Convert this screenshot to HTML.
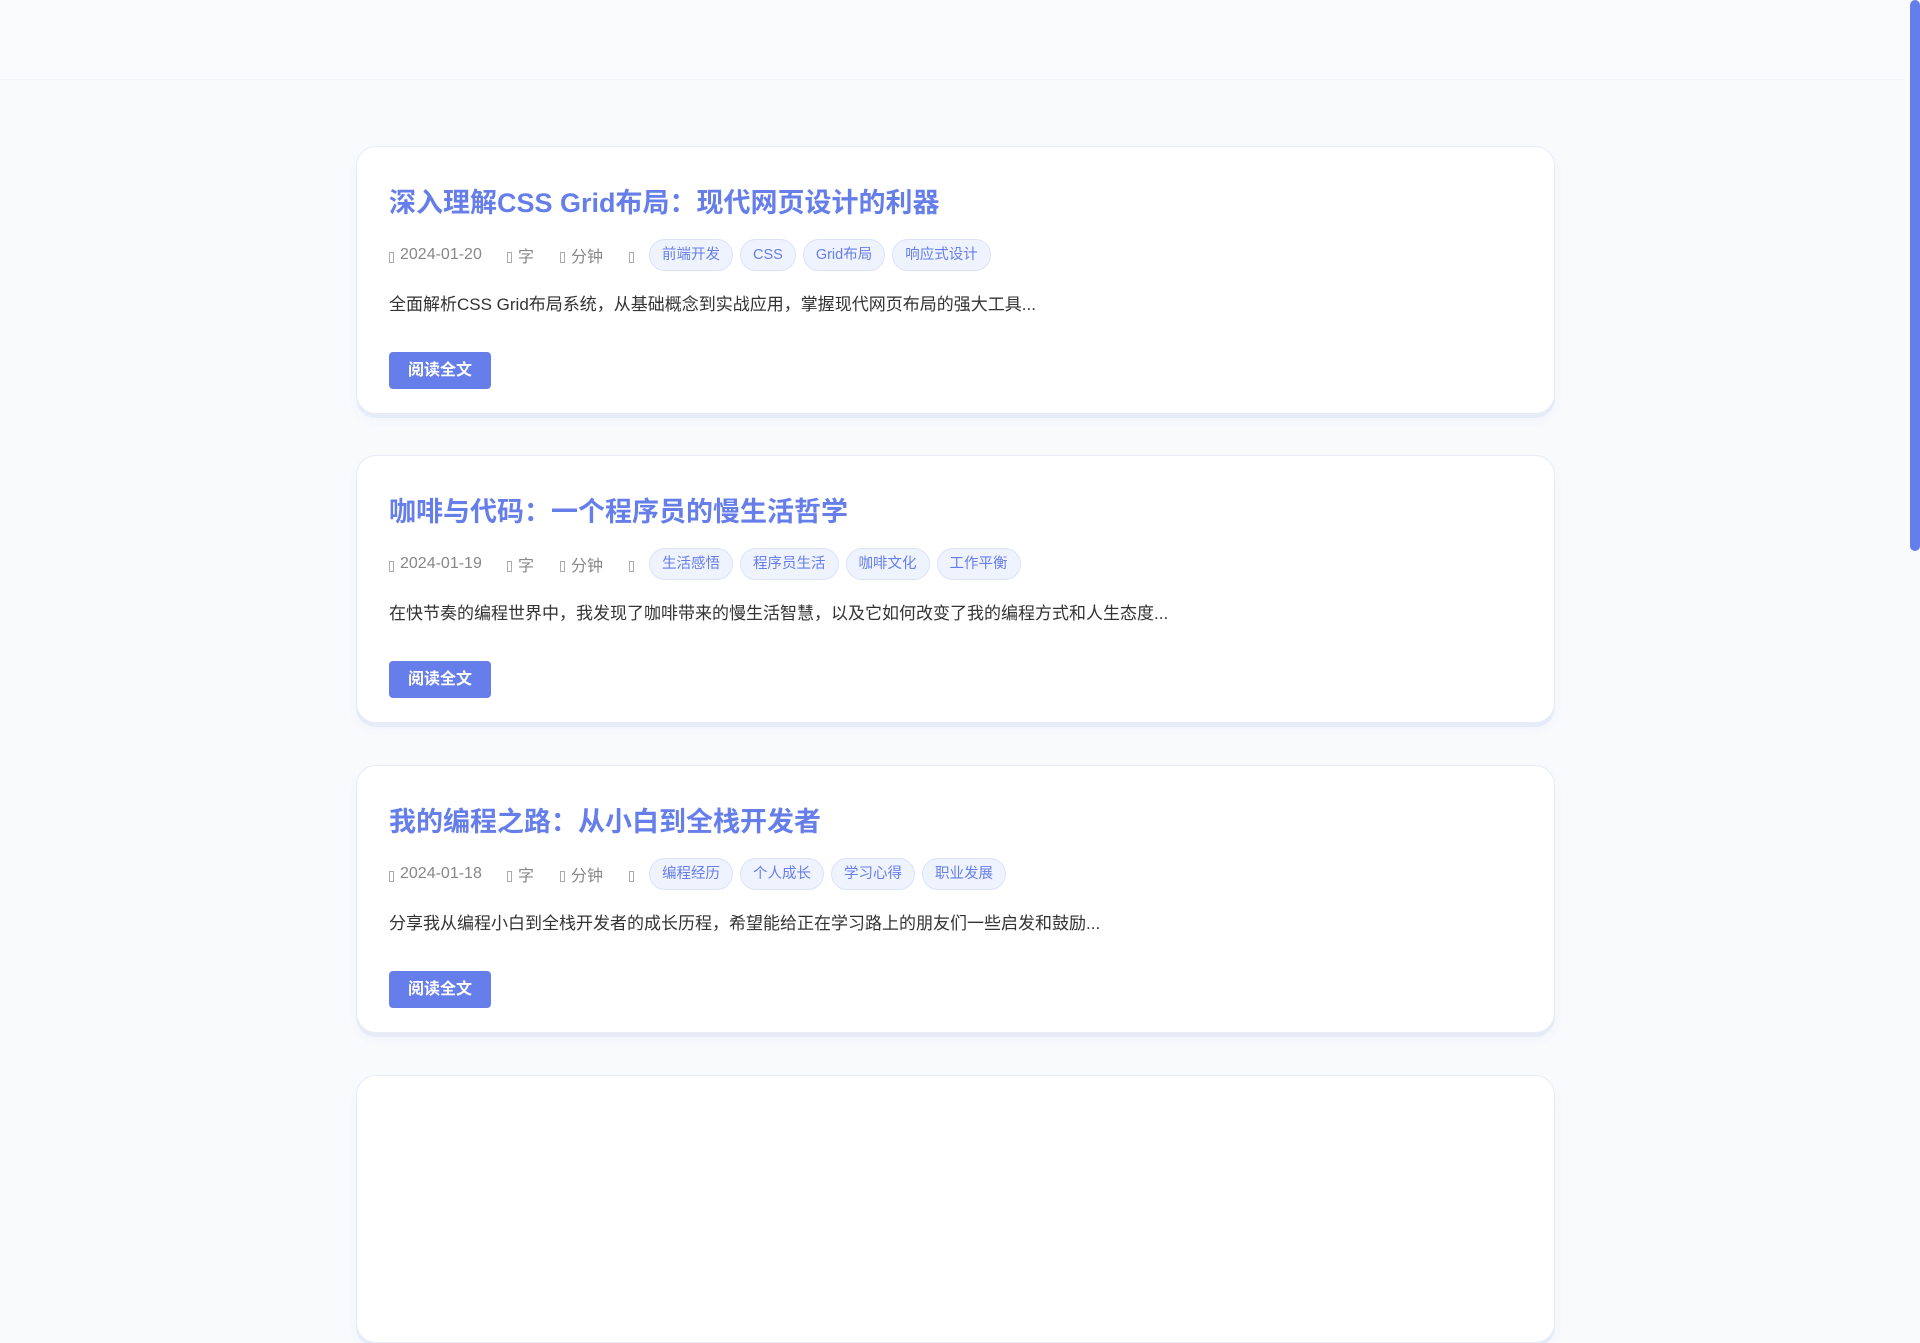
<!DOCTYPE html>
<html><head><meta charset="utf-8"><style>
*{margin:0;padding:0;box-sizing:border-box}
html,body{width:1920px;height:1080px;overflow:hidden;background:#f8fafc;font-family:"Liberation Sans","Noto Sans CJK SC",sans-serif}
.hdr{position:absolute;left:0;top:0;width:1905px;height:80px;background:#f9fbfd;border-bottom:1px solid #f1f4f8}
.card{position:absolute;left:356px;width:1199px;height:268px;background:#fff;border:1px solid #e8edf5;border-radius:20px;box-shadow:0 4px 0 #e6ecf7,0 6px 10px rgba(102,126,234,0.05)}
.t{position:absolute;left:32px;top:38px;font-size:27px;font-weight:bold;color:#667eea;line-height:36px;white-space:nowrap}
.m{position:absolute;left:32px;top:92px;height:32px;display:flex;align-items:center;font-size:16px;color:#888;white-space:nowrap}
.ic{display:inline-block;width:5px;height:11px;border:1px solid #aaa;margin-right:6px;vertical-align:middle;position:relative;top:2px}
.mi{display:flex;align-items:center}
.tag{display:inline-block;height:32px;line-height:30px;padding:0 12px;border:1px solid #dbe3fb;background:#eff3fe;color:#667eea;border-radius:16px;font-size:14.5px;margin-right:7px}
.e{position:absolute;left:32px;top:145px;font-size:17px;color:#333;line-height:26px;white-space:nowrap}
.b{position:absolute;left:32px;top:205px;width:102px;height:37px;background:#667eea;color:#fff;border-radius:4px;font-size:16px;font-weight:bold;text-align:center;line-height:37px}
.sb{position:absolute;right:0;top:0;width:10px;height:551px;background:#667eea;border-radius:5px}
</style></head><body>
<div class="hdr"></div>

<div class="card" style="top:146px">
<div class="t">深入理解CSS Grid布局：现代网页设计的利器</div>
<div class="m"><span class="mi" style="width:118px"><span class="ic"></span>2024-01-20</span><span class="mi" style="width:53px"><span class="ic"></span>字</span><span class="mi" style="width:69px"><span class="ic"></span>分钟</span><span class="mi" style="width:20px"><span class="ic"></span></span>
<span class="tag">前端开发</span><span class="tag">CSS</span><span class="tag">Grid布局</span><span class="tag">响应式设计</span></div>
<div class="e">全面解析CSS Grid布局系统，从基础概念到实战应用，掌握现代网页布局的强大工具...</div>
<div class="b">阅读全文</div>
</div>

<div class="card" style="top:455px">
<div class="t">咖啡与代码：一个程序员的慢生活哲学</div>
<div class="m"><span class="mi" style="width:118px"><span class="ic"></span>2024-01-19</span><span class="mi" style="width:53px"><span class="ic"></span>字</span><span class="mi" style="width:69px"><span class="ic"></span>分钟</span><span class="mi" style="width:20px"><span class="ic"></span></span>
<span class="tag">生活感悟</span><span class="tag">程序员生活</span><span class="tag">咖啡文化</span><span class="tag">工作平衡</span></div>
<div class="e">在快节奏的编程世界中，我发现了咖啡带来的慢生活智慧，以及它如何改变了我的编程方式和人生态度...</div>
<div class="b">阅读全文</div>
</div>

<div class="card" style="top:765px">
<div class="t">我的编程之路：从小白到全栈开发者</div>
<div class="m"><span class="mi" style="width:118px"><span class="ic"></span>2024-01-18</span><span class="mi" style="width:53px"><span class="ic"></span>字</span><span class="mi" style="width:69px"><span class="ic"></span>分钟</span><span class="mi" style="width:20px"><span class="ic"></span></span>
<span class="tag">编程经历</span><span class="tag">个人成长</span><span class="tag">学习心得</span><span class="tag">职业发展</span></div>
<div class="e">分享我从编程小白到全栈开发者的成长历程，希望能给正在学习路上的朋友们一些启发和鼓励...</div>
<div class="b">阅读全文</div>
</div>

<div class="card" style="top:1075px"></div>
<div class="sb"></div>
</body></html>
